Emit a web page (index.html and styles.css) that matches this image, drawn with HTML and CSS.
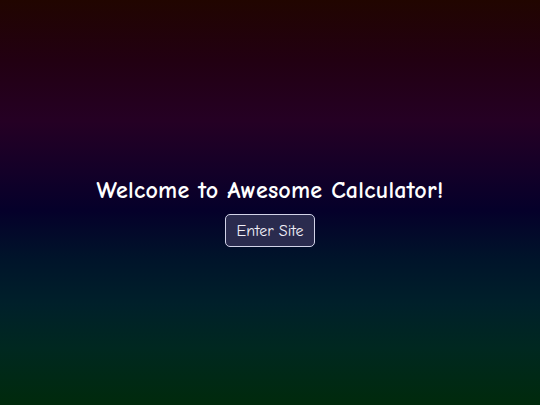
FILE: index.html
```html
<!DOCTYPE html>
<html>
<head>
<meta charset="utf-8">
<link rel="stylesheet" href="styles.css">
</head>
<body>
<main class="landing">
  <h1 class="title">Welcome to Awesome Calculator!</h1>
  <button class="enter">Enter Site</button>
</main>
</body>
</html>
```
FILE: styles.css
```css
html, body {
  margin: 0;
  height: 100%;
}
body {
  background: linear-gradient(to bottom,
    #210500 0%,
    #220012 15%,
    #250024 30%,
    #140028 42%,
    #05002a 52%,
    #00142a 64%,
    #00202a 75%,
    #002820 86%,
    #002a0c 100%);
  font-family: "Comic Sans MS", "Comic Neue", cursive;
  color: #fff;
}
.landing {
  height: 100%;
  display: flex;
  flex-direction: column;
  align-items: center;
  justify-content: center;
  gap: 10px;
  padding-top: 18px;
  box-sizing: border-box;
}
.title {
  margin: 0;
  font-size: 24px;
  line-height: 1.2;
  font-weight: bold;
  letter-spacing: 0.25px;
}
.enter {
  font-family: inherit;
  font-size: 16px;
  font-weight: 500;
  color: #f0eff8;
  background: #2a2b4e;
  border: 1.5px solid #d2d3e8;
  border-radius: 5px;
  padding: 0;
  width: 90px;
  height: 33px;
}
```
